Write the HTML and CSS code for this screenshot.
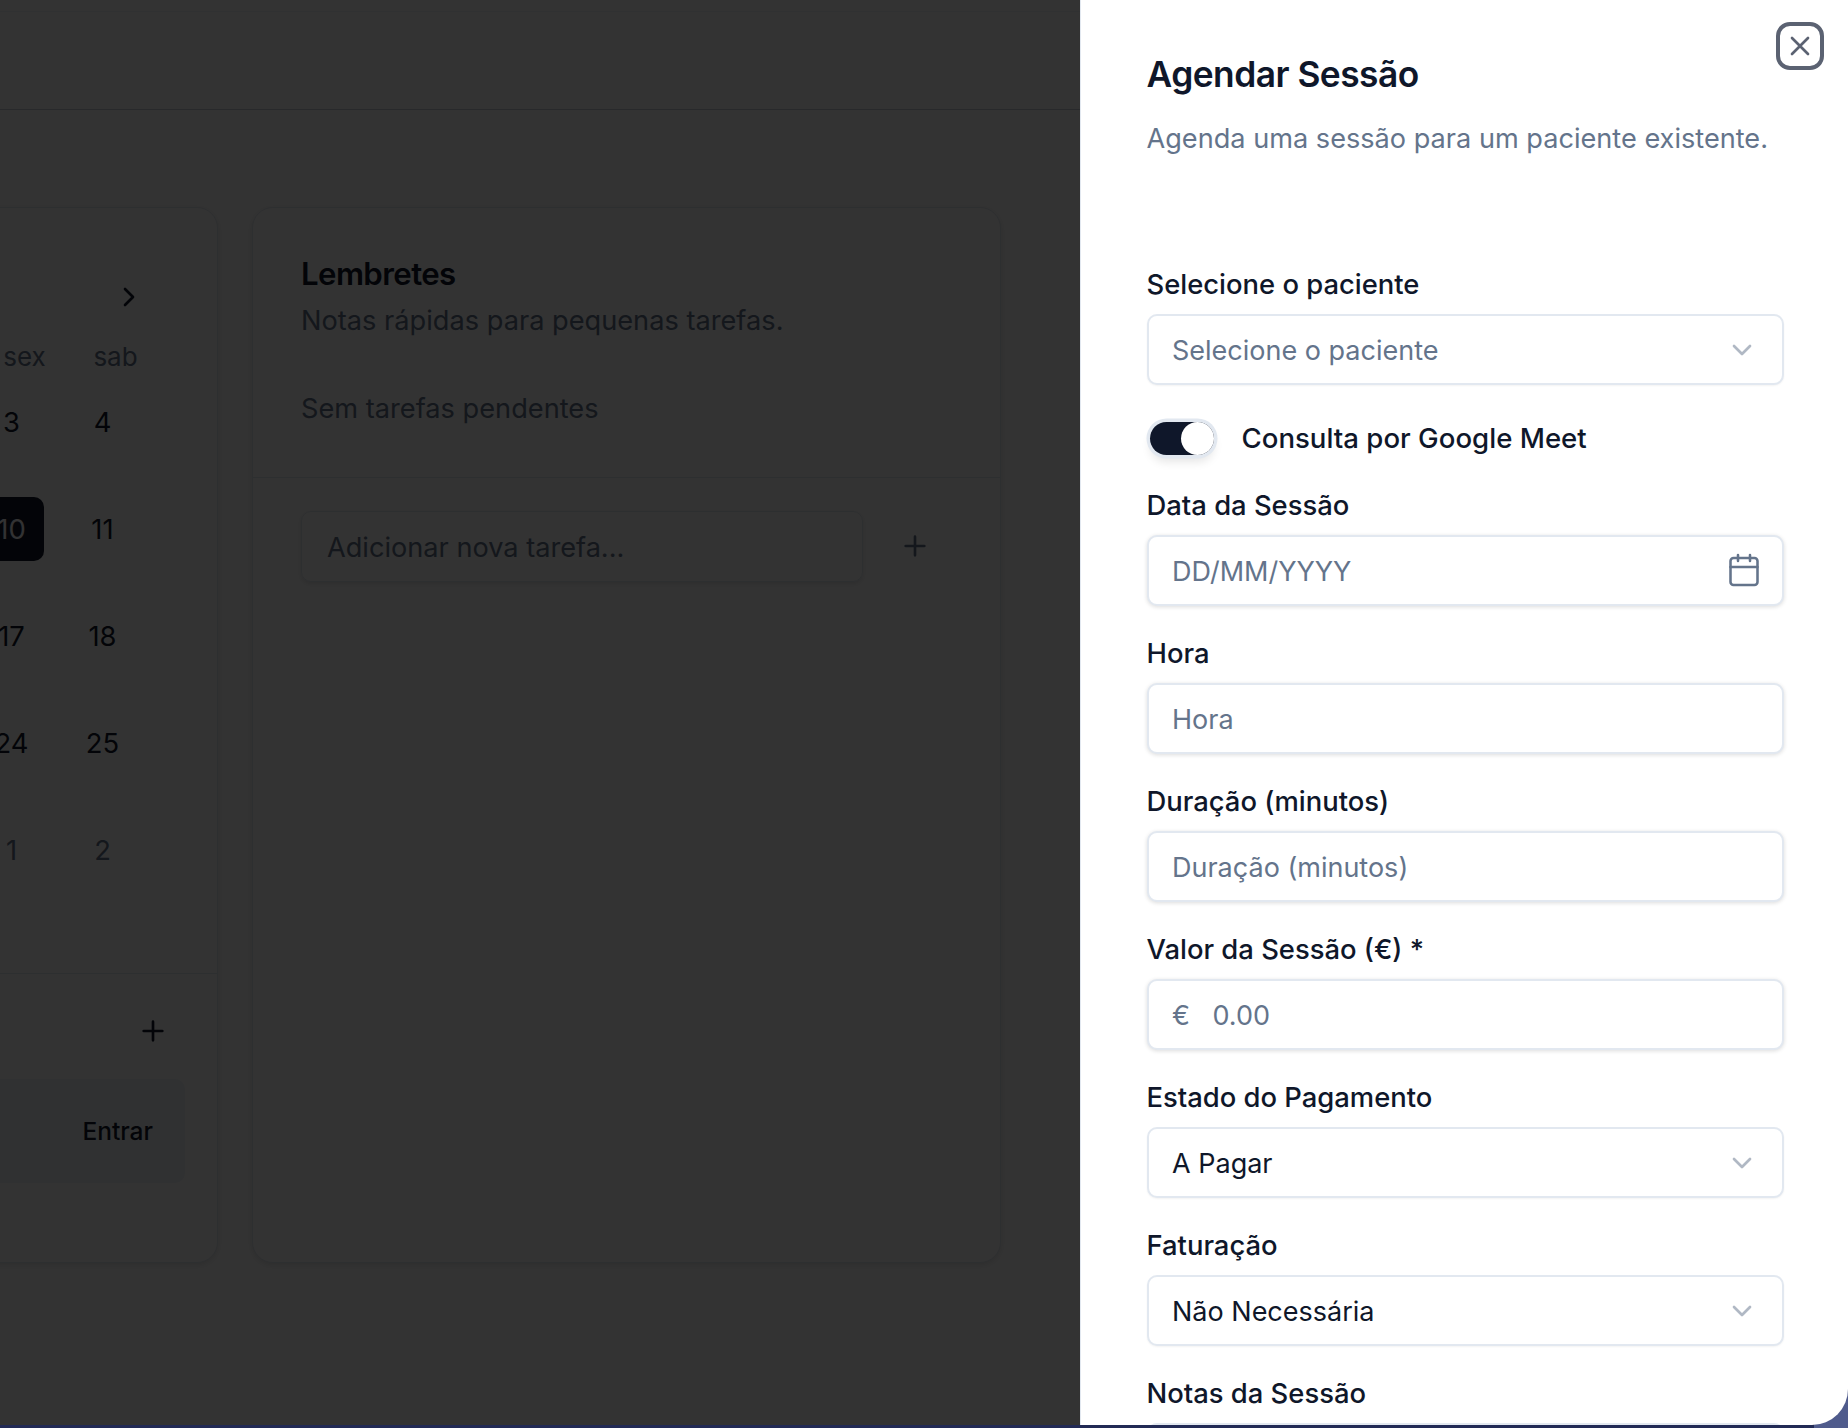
FILE: index.html
```html
<!DOCTYPE html>
<html lang="pt">
<head>
<meta charset="utf-8">
<title>Agendar Sessão</title>
<link rel="stylesheet" href="styles.css">
</head>
<body>
<div class="app">
  <header class="topbar"></header>
  <main class="main">
    <section class="card cal-card">
      <div class="cal-top">
        <div class="cal-nav">
          <svg class="ico-next" viewBox="0 0 24 24"><path d="m9 18 6-6-6-6"/></svg>
        </div>
        <div class="cal-grid">
          <span class="dow">sex</span><span class="dow">sab</span>
          <span class="day">3</span><span class="day">4</span>
          <span class="day today">10</span><span class="day">11</span>
          <span class="day">17</span><span class="day">18</span>
          <span class="day">24</span><span class="day">25</span>
          <span class="day muted">1</span><span class="day muted">2</span>
        </div>
      </div>
      <div class="cal-foot">
        <div class="foot-row">
          <svg class="ico-plus" viewBox="0 0 24 24"><path d="M5 12h14M12 5v14"/></svg>
        </div>
        <div class="session"><span class="enter">Entrar</span></div>
      </div>
    </section>
    <section class="card rem-card">
      <div class="rem-top">
        <h2 class="rem-title">Lembretes</h2>
        <p class="rem-sub">Notas rápidas para pequenas tarefas.</p>
        <p class="rem-empty">Sem tarefas pendentes</p>
      </div>
      <div class="rem-add">
        <div class="rem-input">Adicionar nova tarefa...</div>
        <svg class="ico-add" viewBox="0 0 24 24"><path d="M5 12h14M12 5v14"/></svg>
      </div>
    </section>
  </main>
</div>
<div class="overlay"></div>
<div class="corner"></div>
<aside class="sheet">
  <button class="close" aria-label="Fechar">
    <svg viewBox="0 0 24 24"><path d="M18 6 6 18M6 6l12 12"/></svg>
  </button>
  <h1 class="sheet-title">Agendar Sessão</h1>
  <p class="sheet-desc">Agenda uma sessão para um paciente existente.</p>
  <form class="form">
    <div class="field first">
      <label class="label">Selecione o paciente</label>
      <div class="control"><span class="ph">Selecione o paciente</span>
        <svg class="chev" viewBox="0 0 24 24"><path d="m6 9 6 6 6-6"/></svg></div>
    </div>
    <div class="toggle-row">
      <span class="switch"><span class="thumb"></span></span>
      <span class="toggle-label">Consulta por Google Meet</span>
    </div>
    <div class="field">
      <label class="label">Data da Sessão</label>
      <div class="control raised"><span class="ph">DD/MM/YYYY</span>
        <svg class="cal-ico" viewBox="0 0 24 24"><rect x="3" y="4" width="18" height="18" rx="2"/><path d="M16 2v4M8 2v4M3 10h18"/></svg></div>
    </div>
    <div class="field">
      <label class="label">Hora</label>
      <div class="control raised"><span class="ph">Hora</span></div>
    </div>
    <div class="field">
      <label class="label">Duração (minutos)</label>
      <div class="control raised"><span class="ph">Duração (minutos)</span></div>
    </div>
    <div class="field">
      <label class="label">Valor da Sessão (€) *</label>
      <div class="control raised euro"><span class="ph">€</span><span class="ph">0.00</span></div>
    </div>
    <div class="field">
      <label class="label">Estado do Pagamento</label>
      <div class="control"><span class="val">A Pagar</span>
        <svg class="chev" viewBox="0 0 24 24"><path d="m6 9 6 6 6-6"/></svg></div>
    </div>
    <div class="field">
      <label class="label">Faturação</label>
      <div class="control"><span class="val">Não Necessária</span>
        <svg class="chev" viewBox="0 0 24 24"><path d="m6 9 6 6 6-6"/></svg></div>
    </div>
    <div class="field">
      <label class="label">Notas da Sessão</label>
      <div class="control textarea"></div>
    </div>
  </form>
</aside>
</body>
</html>
```

FILE: styles.css
```css
* { box-sizing: border-box; }
html, body { margin: 0; height: 100%; }
body {
  height: 1428px;
  overflow: hidden;
  position: relative;
  background: #222a55;
  font-family: Inter, "Noto Sans", sans-serif;
  color: #0f172a;
}
svg { fill: none; stroke: currentColor; stroke-linecap: round; stroke-linejoin: round; display: block; }

.app {
  width: 1848px;
  height: 1425px;
  background: #fff;
  overflow: hidden;
}
.topbar { height: 99px; margin-top: 11px; border-top: 1px solid #f1f5f9; border-bottom: 1px solid #c8ced8; }
.main {
  width: 1080px;
  display: flex;
  justify-content: flex-end;
  gap: 34px;
  padding: 97px 79px 0 0;
}
.card {
  flex: none;
  height: 1056px;
  background: #fff;
  border: 1px solid #e2e8f0;
  border-radius: 21px;
  box-shadow: 0 2px 6px rgba(0,0,0,.12);
}
.cal-card { width: 640px; display: flex; flex-direction: column; }
.cal-top { height: 766px; border-bottom: 1px solid #e2e8f0; padding: 62px 0 0; }
.cal-nav { height: 53px; display: flex; justify-content: flex-end; padding-right: 72px; align-items: center; color: #0f172a; }
.ico-next { width: 32px; height: 32px; stroke-width: 2; }
.cal-grid {
  display: grid;
  grid-template-columns: repeat(2, 91px);
  grid-template-rows: 34px;
  grid-auto-rows: 107px;
  justify-content: end;
  padding-right: 69px;
  margin-top: 11px;
}
.dow { height: 45px; align-self: start; text-align: center; padding-left: 26px; font-size: 26px; line-height: 45px; color: #64748b; }
.day { display: flex; align-items: center; justify-content: center; width: 64px; height: 64px; justify-self: center; align-self: center; font-size: 27.4px; color: #0f172a; border-radius: 10px; }
.today { background: #0f172a; color: #f8fafc; }
.muted { color: #64748b; }
.cal-foot { padding: 0 32px 0 0; flex: 1; }
.foot-row { height: 105px; padding-top: 8px; display: flex; justify-content: flex-end; align-items: center; padding-right: 16px; }
.ico-plus { width: 32px; height: 32px; stroke-width: 2; }
.session { height: 104px; background: #edf5f7; border-radius: 10px; display: flex; justify-content: flex-end; align-items: center; padding-right: 32px; }
.enter { font-size: 24.5px; font-weight: 500; }

.rem-card { width: 749px; display: flex; flex-direction: column; }
.rem-top { height: 270px; padding: 48px 48px 0; border-bottom: 1px solid #e2e8f0; }
.rem-title { margin: 0; font-size: 31.2px; line-height: 36px; font-weight: 600; letter-spacing: -0.6px; }
.rem-sub { margin: 11px 0 0; font-size: 27.2px; line-height: 36px; color: #64748b; }
.rem-empty { margin: 52px 0 0; font-size: 27.2px; line-height: 36px; color: #64748b; }
.rem-add { display: flex; align-items: center; padding: 33px 48px 0; }
.rem-input { width: 562px; height: 71px; border: 1px solid #e2e8f0; border-radius: 10px; padding: 0 25px; line-height: 72px; font-size: 27.15px; color: #64748b; box-shadow: 0 2px 5px rgba(0,0,0,.12); }
.ico-add { width: 32px; height: 32px; stroke-width: 2; margin-left: 36px; color: #64748b; margin-top: -2px; }

.overlay { position: absolute; inset: 0 0 3px 0; background: rgba(0,0,0,.8); }
.corner { position: absolute; right: 0; bottom: 0; width: 34px; height: 40px; background: #4f5b8c; }

.sheet {
  position: absolute;
  top: 0; right: 0;
  width: 768px;
  height: 1425px;
  background: #fff;
  border-left: 1px solid #e2e8f0;
  border-bottom-right-radius: 36px;
  overflow: hidden;
  padding: 53px 65.5px 0;
}
.close {
  position: absolute;
  top: 22px; right: 24.5px;
  width: 47.5px; height: 47.5px;
  padding: 0;
  background: #fff;
  border: 4px solid #5b6272;
  border-radius: 14px;
  color: #5b6272;
  display: flex; align-items: center; justify-content: center;
}
.close svg { width: 32px; height: 32px; stroke-width: 2; flex: none; }
.sheet-title { margin: 0; font-size: 35.3px; line-height: 44px; font-weight: 600; letter-spacing: -0.5px; }
.sheet-desc { margin: 20px 0 0; font-size: 27.13px; line-height: 44px; color: #64748b; }
.form { margin-top: 109px; width: 637px; }
.field { margin-top: 33px; }
.field.first { margin-top: 0; }
.label { display: block; height: 28px; line-height: 28px; font-size: 27.4px; font-weight: 500; margin-bottom: 16px; }
.control {
  height: 71px;
  display: flex;
  align-items: center;
  justify-content: space-between;
  padding: 0 23.5px;
  border: 2px solid #e2e8f0;
  border-radius: 10px;
  background: #fff;
  font-size: 27px;
  box-shadow: 0 1px 2px rgba(0,0,0,.05);
}
.control.raised { box-shadow: 0 1px 4px rgba(0,0,0,.14); }
.euro { justify-content: flex-start; gap: 22.5px; }
.textarea { height: 140px; }
.ph { color: #64748b; padding-top: 2px; }
.val { color: #0f172a; padding-top: 2px; }
.chev { width: 32px; height: 32px; stroke-width: 2; color: #64748b; opacity: .5; }
.cal-ico { width: 36px; height: 36px; stroke-width: 1.7; color: #64748b; margin: -2px -3.5px 0 0; }
.toggle-row { display: flex; align-items: center; gap: 28px; height: 40px; margin-top: 33px; margin-left: 3px; }
.switch { width: 64px; height: 33px; border-radius: 17px; background: #0f172a; position: relative; display: block; box-shadow: 0 0 0 3.5px #e2e8f0, 0 7px 10px rgba(0,0,0,.1); }
.thumb { position: absolute; top: 0; right: 0; width: 33px; height: 33px; border-radius: 50%; background: #fff; }
.toggle-label { font-size: 27.6px; font-weight: 500; }
```
